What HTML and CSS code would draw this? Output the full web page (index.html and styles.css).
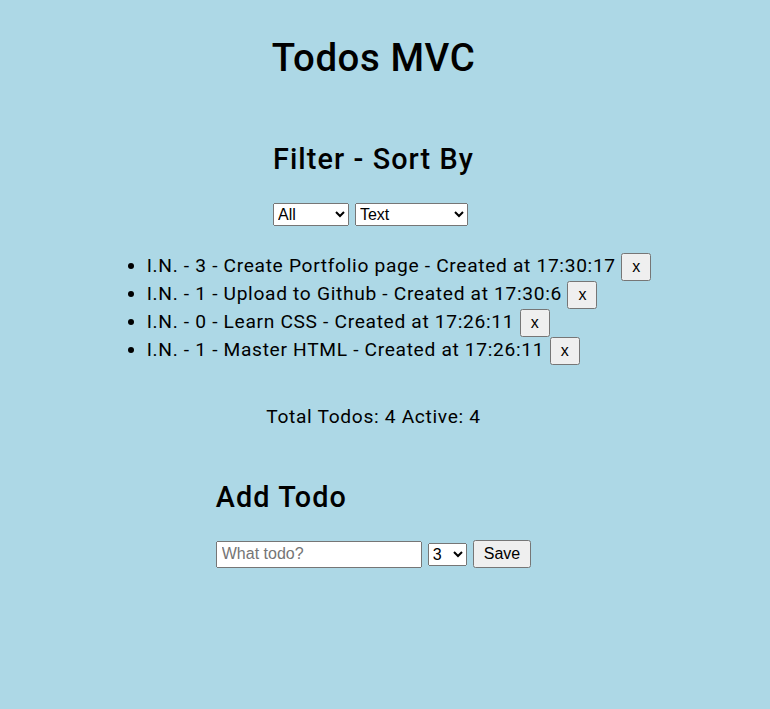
FILE: index.html
```html
<!DOCTYPE html>
<html lang="en">
<head>
<meta charset="utf-8">
<title>Todos MVC</title>
<link rel="stylesheet" href="styles.css">
</head>
<body>
<div class="app">
  <h1 class="title">Todos MVC</h1>

  <section class="filter">
    <h2 class="heading">Filter - Sort By</h2>
    <div class="controls">
      <select class="select select-filter">
        <option>All</option>
        <option>Active</option>
        <option>Done</option>
      </select>
      <select class="select select-sort">
        <option>Text</option>
        <option>Importance</option>
        <option>Date</option>
      </select>
    </div>
  </section>

  <ul class="todo-list">
    <li>I.N. - 3 - Create Portfolio page - Created at 17:30:17 <button class="btn btn-x">x</button></li>
    <li>I.N. - 1 - Upload to Github - Created at 17:30:6 <button class="btn btn-x">x</button></li>
    <li>I.N. - 0 - Learn CSS - Created at 17:26:11 <button class="btn btn-x">x</button></li>
    <li>I.N. - 1 - Master HTML - Created at 17:26:11 <button class="btn btn-x">x</button></li>
  </ul>

  <p class="stats">Total Todos: 4 Active: 4</p>

  <section class="add">
    <h2 class="heading">Add Todo</h2>
    <form class="controls">
      <input class="text-input" type="text" placeholder="What todo?">
      <select class="select select-imp">
        <option>0</option>
        <option>1</option>
        <option>2</option>
        <option selected>3</option>
      </select>
      <button class="btn btn-save" type="button">Save</button>
    </form>
  </section>
</div>
</body>
</html>
```

FILE: styles.css
```css
html, body {
  margin: 0;
  background: #add8e6;
}

body {
  font-family: Roboto, "Noto Sans", sans-serif;
  font-size: 19.2px;
  letter-spacing: 0.035em;
  color: #000;
}

.app {
  width: 747px;
  padding-top: 8px;
  display: flex;
  flex-direction: column;
  align-items: center;
}

.title {
  font-size: 38.4px;
  font-weight: 500;
  line-height: 46px;
  letter-spacing: 0.015em;
  margin: 27px 0 0;
}

.heading {
  font-size: 28.8px;
  font-weight: 500;
  line-height: 34px;
  letter-spacing: 0.038em;
  margin: 0;
}

.filter {
  margin-top: 61px;
}

.controls {
  display: flex;
  align-items: center;
  gap: 6px;
  margin-top: 27px;
  letter-spacing: normal;
}

.select {
  font-family: "Liberation Sans", Arial, sans-serif;
  font-size: 16px;
  height: 23px;
  box-sizing: border-box;
}

.select-filter { width: 76px; }
.select-sort { width: 113px; }
.select-imp { width: 39px; }

.todo-list {
  margin: 27px 0 0 11px;
  padding: 0 0 0 40px;
  line-height: 23px;
}

.btn {
  font-family: "Liberation Sans", Arial, sans-serif;
  font-size: 16px;
  letter-spacing: normal;
  height: 28px;
  padding: 0 9px;
  box-sizing: border-box;
  vertical-align: baseline;
}

.stats {
  margin: 40px 0 0;
  line-height: 23px;
}

.add {
  margin-top: 52px;
}

.add .controls {
  margin-top: 26px;
}

.text-input {
  font-family: "Liberation Sans", Arial, sans-serif;
  font-size: 16px;
  width: 206px;
  height: 27px;
  padding: 0 4px;
  box-sizing: border-box;
}

.text-input::placeholder {
  color: #757575;
}
```
